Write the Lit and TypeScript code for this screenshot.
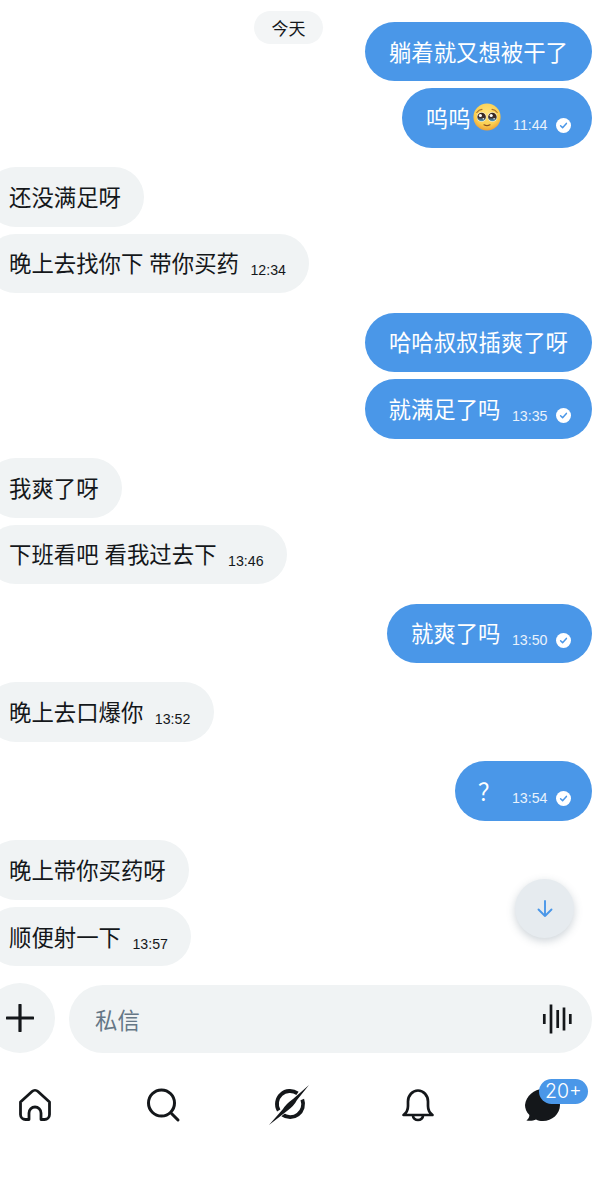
import { LitElement, html, css } from "lit";
import { customElement } from "lit/decorators.js";

const check = html`<svg class="chk" viewBox="0 0 15 15"><circle cx="7.5" cy="7.5" r="7.5" fill="#fff"/><path d="M4.6 7.8l2 2 3.8-4.4" fill="none" stroke="#4a97e8" stroke-width="1.5" stroke-linecap="round" stroke-linejoin="round"/></svg>`;

const emoji = html`<svg class="emo" viewBox="0 0 28 28">
  <defs>
    <radialGradient id="f" cx="50%" cy="35%" r="70%"><stop offset="0" stop-color="#fee27a"/><stop offset="0.65" stop-color="#fbcf50"/><stop offset="1" stop-color="#e8932e"/></radialGradient>
    <linearGradient id="e" x1="0" y1="0" x2="0" y2="1"><stop offset="0" stop-color="#33221a"/><stop offset="0.55" stop-color="#3f2f2a"/><stop offset="1" stop-color="#4fa6cf"/></linearGradient>
  </defs>
  <circle cx="14" cy="14" r="13.6" fill="url(#f)"/>
  <path d="M3.800 9.500Q5.800 6.600 9 6.400M19 6.400Q22.200 6.600 24.200 9.500" fill="none" stroke="#a9702c" stroke-width="1.100" stroke-linecap="round"/>
  <circle cx="8.600" cy="14" r="4.800" fill="#f4f1e4"/><circle cx="19.400" cy="14" r="4.800" fill="#f4f1e4"/>
  <circle cx="8.600" cy="14" r="4.300" fill="url(#e)"/><circle cx="19.400" cy="14" r="4.300" fill="url(#e)"/>
  <circle cx="7.400" cy="12.500" r="1.600" fill="#fff"/><circle cx="18.200" cy="12.500" r="1.600" fill="#fff"/>
  <circle cx="10.300" cy="15.800" r=".7" fill="#fff"/><circle cx="21.100" cy="15.800" r=".7" fill="#fff"/>
  <path d="M11 21.800Q14 23.600 17 21.800" fill="none" stroke="#8a5222" stroke-width="1.200" stroke-linecap="round"/>
</svg>`;

type Msg = { t: string; time?: string; out?: boolean; emoji?: boolean; gap?: boolean };
const msgs: Msg[] = [
  { t: "躺着就又想被干了", out: true },
  { t: "呜呜", out: true, emoji: true, time: "11:44" },
  { t: "还没满足呀", gap: true },
  { t: "晚上去找你下 带你买药", time: "12:34" },
  { t: "哈哈叔叔插爽了呀", out: true, gap: true },
  { t: "就满足了吗", out: true, time: "13:35" },
  { t: "我爽了呀", gap: true },
  { t: "下班看吧 看我过去下", time: "13:46" },
  { t: "就爽了吗", out: true, time: "13:50", gap: true },
  { t: "晚上去口爆你", time: "13:52", gap: true },
  { t: "？", out: true, time: "13:54", gap: true },
  { t: "晚上带你买药呀", gap: true },
  { t: "顺便射一下", time: "13:57" },
];

@customElement("app-root")
export class AppRoot extends LitElement {
  static styles = css`
    :host { display: block; width: 606px; height: 1200px; background: #fff; position: relative; overflow: hidden;
      font-family: "Noto Sans CJK SC", "Liberation Sans", sans-serif; color: #14171a; }
    .day { position: absolute; top: 11px; left: 254px; width: 69px; height: 33px; border-radius: 17px; background: #f3f5f6;
      display: flex; align-items: center; justify-content: center; font-size: 17px; }
    .list { display: flex; flex-direction: column; padding-top: 22px; height: 983px; box-sizing: border-box; }
    .row { display: flex; margin-top: 7px; }
    .row.gap { margin-top: 19.6px; }
    .row:first-child { margin-top: 0; }
    .row.out { justify-content: flex-end; padding-right: 14.5px; }
    .row.in { margin-left: -14.5px; }
    .b { height: 59.4px; box-sizing: border-box; border-radius: 30px; padding: 0 23.5px; display: flex; align-items: center;
      font-size: 22.4px; line-height: 30px; white-space: pre; background: #f0f3f4; word-spacing: 1px; }
    .out .b { background: #4a97e8; color: #fff; }
    .out .b.t { padding-right: 20.5px; }
    .txt { position: relative; top: -1px; }
    .time { font-family: "Liberation Sans", sans-serif; font-size: 14.2px; margin-left: 11.5px; position: relative; top: 7px; }
    .out .time { color: #e9f2fc; }
    .chk { width: 15px; height: 15px; margin-left: 8.5px; position: relative; top: 7px; }
    .emo { width: 28px; height: 28px; margin-left: 2px; margin-right: 1px; position: relative; top: -1px; }
    .fab { position: absolute; left: 515px; top: 879px; width: 59px; height: 59px; border-radius: 50%; background: #e6ebef;
      box-shadow: 0 3px 8px rgba(80,100,120,.28); display: flex; align-items: center; justify-content: center; }
    .fab svg { width: 22px; height: 22px; }
    .composer { display: flex; align-items: flex-end; gap: 14px; margin-left: -15px; height: 70px; padding-right: 14px; }
    .plus { width: 70px; height: 70px; border-radius: 50%; background: #f0f3f4; flex: none; display: flex; align-items: center; justify-content: center; }
    .plus svg { width: 28px; height: 28px; }
    .input { flex: 1; height: 68px; border-radius: 34px; background: #f0f3f4; display: flex; align-items: center; justify-content: space-between;
      padding: 0 18px 0 26px; font-size: 22.4px; color: #657786; }
    .input svg { width: 32px; height: 32px; }
    .nav { display: flex; align-items: center; gap: 95.5px; padding: 36px 0 0 19px; }
    .ic { width: 32px; height: 32px; flex: none; position: relative; }
    .ic svg { width: 32px; height: 32px; display: block; overflow: visible; }
    .badge { position: absolute; left: 10px; top: -10px; width: 49px; height: 25px; border-radius: 13px; background: #4a97e8; color: #fff;
      font-family: "Inter", sans-serif; font-weight: 300; font-size: 19.5px; line-height: 25px; text-align: center; }
  `;

  private bubble(m: Msg) {
    return html`<div class="row ${m.out ? "out" : "in"} ${m.gap ? "gap" : ""}">
      <div class="b ${m.out && m.time ? "t" : ""}">
        <span class="txt">${m.t}</span>${m.emoji ? emoji : ""}
        ${m.time ? html`<span class="time">${m.time}</span>` : ""}
        ${m.out && m.time ? check : ""}
      </div>
    </div>`;
  }

  render() {
    return html`
      <div class="list">${msgs.map((m) => this.bubble(m))}</div>
      <div class="day">今天</div>
      <div class="fab"><svg viewBox="0 0 22 22" fill="none" stroke="#4a97e8" stroke-width="1.9" stroke-linecap="round" stroke-linejoin="round"><path d="M11 3v15M4.500 11.500L11 18l6.500-6.500"/></svg></div>
      <div class="composer">
        <div class="plus"><svg viewBox="0 0 28 28"><path d="M14 1v26M1 14h26" stroke="#14171a" stroke-width="3.200" stroke-linecap="round"/></svg></div>
        <div class="input"><span>私信</span>
          <svg viewBox="0 0 32 32" stroke="#14171a" stroke-width="2.700"><path d="M2.300 11v10M9 1.500v29M15.700 7v18M22 4.500v23M28.300 11v10"/></svg>
        </div>
      </div>
      <div class="nav">
        <div class="ic"><svg viewBox="0 0 32 32" fill="none" stroke="#14171a" stroke-width="2.800" stroke-linejoin="round" stroke-linecap="round"><path d="M1.500 13L13 2.500a4.400 4.400 0 0 1 6 0L30.500 13v12.500a5 5 0 0 1-5 5H22V24a6 6 0 0 0-12 0v6.500H6.500a5 5 0 0 1-5-5z"/></svg></div>
        <div class="ic"><svg viewBox="0 0 32 32" fill="none" stroke="#14171a" stroke-width="3" stroke-linecap="round"><circle cx="14.500" cy="14" r="13"/><path d="M24.500 24.500l6.500 6.500"/></svg></div>
        <div class="ic"><svg viewBox="0 0 32 32" fill="none"><path d="M23.500 4.400A13 13 0 0 0 4.700 21.500" stroke="#14171a" stroke-width="3.800"/><path d="M8.500 25.600A13 13 0 0 0 28.300 10.500" stroke="#14171a" stroke-width="3.800"/><path d="M-5 36L9 20Q12 15 19 10L35 -4 23 11Q20 17 13 22z" fill="#14171a" stroke="#fff" stroke-width="1.400" paint-order="stroke"/></svg></div>
        <div class="ic"><svg viewBox="0 0 32 32" fill="none" stroke="#14171a" stroke-width="2.700" stroke-linejoin="round" stroke-linecap="round"><path d="M1.500 26c2.800-2 4.500-4.500 4.500-9v-4.500a10 11 0 0 1 20 0V17c0 4.500 1.700 7 4.500 9z"/><path d="M11 26.500a5 4.500 0 0 0 10 0"/></svg></div>
        <div class="ic"><svg viewBox="0 0 32 32"><path d="M14 0C23 0 31 7 31 16s-8 16-17 16c-3 0-5-.7-7-1.600-2.500 1.200-6 1.600-9.600 1 2-1.400 3-3.400 3-5.400-3-3-4.400-6.500-4.400-10C-3 7 5 0 14 0z" fill="#14171a"/></svg><div class="badge">20+</div></div>
      </div>
    `;
  }
}
